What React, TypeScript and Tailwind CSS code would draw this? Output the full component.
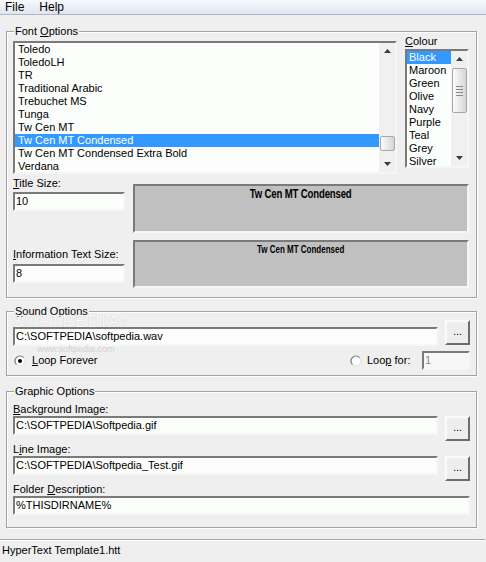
import React from 'react';

const sunken =
  'border-2 border-t-[#7a7a7a] border-l-[#7a7a7a] border-r-[#f6f6f6] border-b-[#f6f6f6]';

const fonts = [
  'Toledo',
  'ToledoLH',
  'TR',
  'Traditional Arabic',
  'Trebuchet MS',
  'Tunga',
  'Tw Cen MT',
  'Tw Cen MT Condensed',
  'Tw Cen MT Condensed Extra Bold',
  'Verdana',
];

const colours = ['Black', 'Maroon', 'Green', 'Olive', 'Navy', 'Purple', 'Teal', 'Grey', 'Silver'];

function Arrow({ down }: { down?: boolean }) {
  return (
    <svg width="7" height="4" viewBox="0 0 7 4">
      <path d={down ? 'M0 0h7L3.5 4z' : 'M3.5 0L7 4H0z'} fill="#3c3c3c" />
    </svg>
  );
}

function ScrollBar({ thumbTop, thumbHeight, grip }: { thumbTop: number; thumbHeight: number; grip?: boolean }) {
  return (
    <div className="w-[16px] h-full flex flex-col bg-[#f0f0f0]">
      <div className="h-[16px] flex items-center justify-center shrink-0">
        <Arrow />
      </div>
      <div className="flex-1">
        <div
          className="mx-auto w-[15px] rounded-[2px] border border-[#a8a8a8] bg-gradient-to-r from-[#fbfbfb] to-[#d6d6d6] flex flex-col items-center justify-center gap-[2px]"
          style={{ marginTop: thumbTop, height: thumbHeight }}
        >
          {grip && (
            <>
              <div className="w-[7px] h-[1px] bg-[#8a8a8a]" />
              <div className="w-[7px] h-[1px] bg-[#8a8a8a]" />
              <div className="w-[7px] h-[1px] bg-[#8a8a8a]" />
              <div className="w-[7px] h-[1px] bg-[#8a8a8a]" />
            </>
          )}
        </div>
      </div>
      <div className="h-[16px] flex items-center justify-center shrink-0">
        <Arrow down />
      </div>
    </div>
  );
}

function Radio({ checked }: { checked?: boolean }) {
  return (
    <svg width="12" height="12" viewBox="0 0 12 12">
      <circle cx="6" cy="6" r="5" fill="#fdfdfd" stroke="#e2e2e2" strokeWidth="1" />
      <path d="M2.46 9.54A5 5 0 0 1 9.54 2.46" stroke="#808080" strokeWidth="1.2" fill="none" />
      {checked && <circle cx="6" cy="6" r="2" fill="#000" />}
    </svg>
  );
}

function Group({ label, className, children }: { label: React.ReactNode; className?: string; children: React.ReactNode }) {
  return (
    <div
      className={`relative ml-[6px] w-[471px] border border-[#a3a3a3] shadow-[inset_1px_1px_0_#fdfdfd,1px_1px_0_#fdfdfd] ${className ?? ''}`}
    >
      <span className="absolute left-[7px] -top-[7px] px-[1px] bg-[#efefef] leading-[13px]">{label}</span>
      {children}
    </div>
  );
}

function TextBox({ value, className, disabled }: { value: string; className: string; disabled?: boolean }) {
  return (
    <div
      className={`${sunken} h-[19px] pl-[1px] leading-[15px] whitespace-nowrap overflow-hidden ${
        disabled ? 'bg-[#f7f7f7] text-[#8a8a8a]' : 'bg-[#fcfefb]'
      } ${className}`}
    >
      {value}
    </div>
  );
}

function Browse() {
  return (
    <div className="w-[25px] h-[25px] shrink-0 border-2 border-t-[#fbfbfb] border-l-[#fbfbfb] border-r-[#6c6c6c] border-b-[#6c6c6c] bg-[#ededed] flex items-center justify-center leading-none pb-[3px]">
      ...
    </div>
  );
}

export default function App() {
  return (
    <div className="w-[486px] h-[562px] overflow-hidden bg-[#efefef] flex flex-col font-['Liberation_Sans',Arial,sans-serif] text-[11px] leading-[13px] text-black">
      {/* menu */}
      <div className="h-[15px] shrink-0 flex items-center border-b border-[#b0b8c8] bg-gradient-to-b from-[#f7f9fd] to-[#dfe5ef] text-[12px]">
        <span className="ml-[5px]">File</span>
        <span className="ml-[15px]">Help</span>
      </div>

      {/* font options */}
      <Group
        className="mt-[16px] pb-[9px]"
        label={
          <>
            Font <u>O</u>ptions
          </>
        }
      >
        <div className="flex items-start pt-[2px] pl-[6px] gap-[8px]">
          <div className={`${sunken} mt-[7px] w-[384px] h-[133px] bg-[#fcfefb] flex`}>
            <div className="flex-1">
              {fonts.map((f) => (
                <div
                  key={f}
                  className={`h-[13px] pl-[3px] whitespace-nowrap ${
                    f === 'Tw Cen MT Condensed' ? 'bg-[#3399ff] text-white' : ''
                  }`}
                >
                  {f}
                </div>
              ))}
            </div>
            <ScrollBar thumbTop={77} thumbHeight={15} />
          </div>
          <div className="w-[64px]">
            <div className="h-[14px] leading-[14px]">
              <u>C</u>olour
            </div>
            <div className={`${sunken} mt-[1px] h-[119px] bg-[#fcfefb] flex overflow-hidden`}>
              <div className="flex-1">
                {colours.map((c) => (
                  <div
                    key={c}
                    className={`h-[13px] pl-[2px] ${c === 'Black' ? 'bg-[#3399ff] text-white' : ''}`}
                  >
                    {c}
                  </div>
                ))}
              </div>
              <ScrollBar thumbTop={1} thumbHeight={45} grip />
            </div>
          </div>
        </div>

        <div className="flex items-start pl-[6px] gap-[8px]">
          <div className="w-[112px]">
            <div className="mt-[2px] h-[14px] leading-[14px]">
              <u>T</u>itle Size:
            </div>
            <TextBox value="10" className="mt-[2px] w-[112px]" />
          </div>
          <div className={`${sunken} mt-[10px] w-[336px] h-[49px] bg-[#c0c0c0] text-center pt-[2px]`}>
            <span className="inline-block scale-x-[0.8] font-bold text-[12px] tracking-[-0.2px]">
              Tw Cen MT Condensed
            </span>
          </div>
        </div>

        <div className="flex items-start pl-[6px] gap-[8px]">
          <div className="w-[112px]">
            <div className="mt-[14px] h-[14px] leading-[14px] whitespace-nowrap">
              <u>I</u>nformation Text Size:
            </div>
            <TextBox value="8" className="mt-[3px] w-[112px]" />
          </div>
          <div className={`${sunken} mt-[7px] w-[336px] h-[48px] bg-[#c0c0c0] text-center pt-[1px]`}>
            <span className="inline-block scale-x-[0.8] font-bold text-[10px]">Tw Cen MT Condensed</span>
          </div>
        </div>
      </Group>

      {/* sound options */}
      <Group
        className="mt-[13px] pb-[5px]"
        label={
          <>
            <u>S</u>ound Options
          </>
        }
      >
        <span className="absolute left-[5px] top-[2px] text-[16px] leading-[16px] tracking-[2px] text-[#fbfbfb] [text-shadow:0_0_1px_#b8b8b8] pointer-events-none">
          SOFTPEDIA<sup className="text-[6px]">™</sup>
        </span>
        <div className="relative flex items-start pt-[8px] pl-[6px] gap-[7px]">
          <TextBox value="C:\SOFTPEDIA\softpedia.wav" className="mt-[7px] w-[425px]" />
          <Browse />
        </div>
        <div className="relative flex items-center mt-[5px] pl-[7px] pr-[6px] h-[19px]">
          <span className="absolute left-[30px] -top-[6px] text-[9px] leading-[9px] text-[#d2d2d2] pointer-events-none">
            www.softpedia.com
          </span>
          <Radio checked />
          <span className="relative ml-[6px]">
            <u>L</u>oop Forever
          </span>
          <div className="ml-auto flex items-center">
            <Radio />
            <span className="ml-[5px] w-[55px]">
              Loo<u>p</u> for:
            </span>
            <TextBox value="1" disabled className="w-[48px]" />
          </div>
        </div>
      </Group>

      {/* graphic options */}
      <Group className="mt-[15px] pt-[10px] pb-[12px] pl-[6px]" label="Graphic Options">
        <div className="h-[14px] leading-[14px]">
          <u>B</u>ackground Image:
        </div>
        <div className="flex items-start gap-[7px]">
          <TextBox value="C:\SOFTPEDIA\Softpedia.gif" className="w-[425px]" />
          <Browse />
        </div>
        <div className="mt-[1px] h-[14px] leading-[14px]">
          L<u>i</u>ne Image:
        </div>
        <div className="flex items-start gap-[7px]">
          <TextBox value="C:\SOFTPEDIA\Softpedia_Test.gif" className="w-[425px]" />
          <Browse />
        </div>
        <div className="mt-[1px] h-[14px] leading-[14px]">
          Folder <u>D</u>escription:
        </div>
        <TextBox value="%THISDIRNAME%" className="w-[457px]" />
      </Group>

      {/* status bar */}
      <div className="mt-[11px] w-[485px] flex-1 border-t border-[#a3a3a3] shadow-[inset_0_1px_0_#fdfdfd] pt-[3px] pl-[2px] leading-[14px]">
        HyperText Template1.htt
      </div>
    </div>
  );
}
